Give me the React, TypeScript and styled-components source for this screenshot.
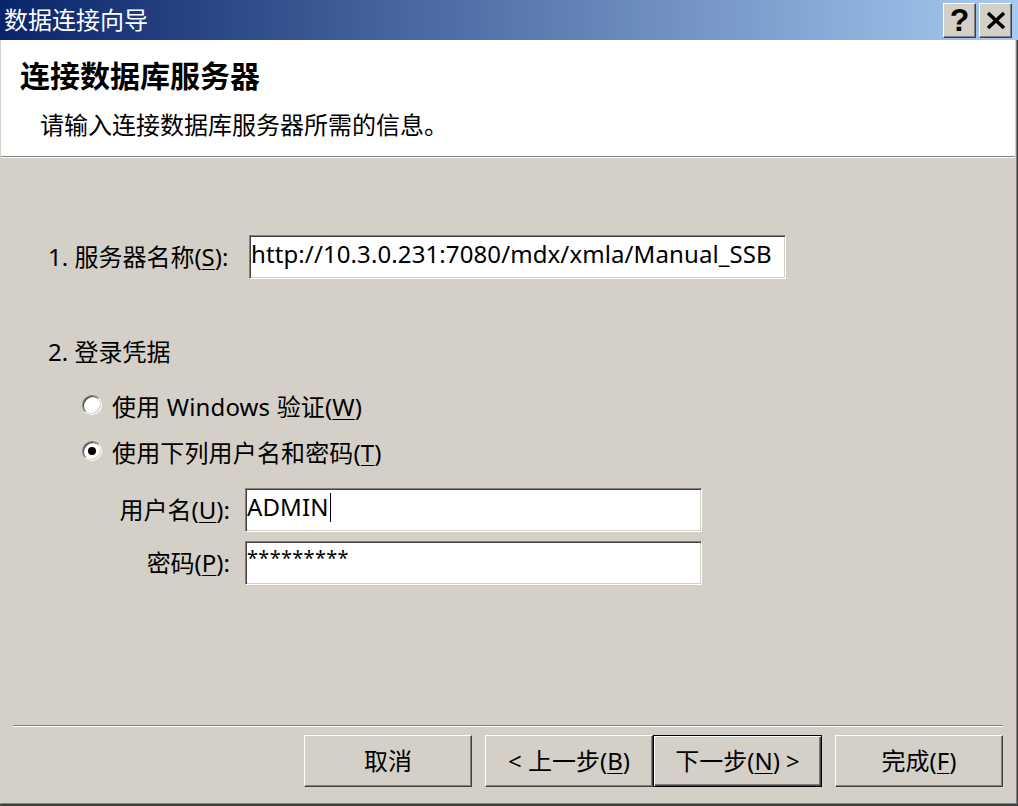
import styled, { createGlobalStyle } from 'styled-components'

const GlobalStyle = createGlobalStyle`
  html, body {
    margin: 0;
    padding: 0;
    background: #d4d0c8;
  }
  body {
    font-family: "Noto Sans", "Noto Sans CJK SC", sans-serif;
    color: #000;
  }
`

const Window = styled.div`
  width: 1018px;
  height: 806px;
  display: flex;
  flex-direction: column;
  background: #d4d0c8;
  overflow: hidden;
`

const TitleBar = styled.div`
  flex: none;
  height: 40px;
  display: flex;
  align-items: center;
  padding: 0 6px 0 4px;
  background: linear-gradient(to right, #0a246a, #a6caf0);
`

const Title = styled.div`
  flex: 1;
  color: #fff;
  font-size: 24px;
  line-height: 40px;
`

const CaptionButtons = styled.div`
  display: flex;
  gap: 3px;
`

const CaptionButton = styled.div`
  width: 33px;
  height: 35px;
  box-sizing: border-box;
  display: flex;
  align-items: center;
  justify-content: center;
  background: #d4d0c8;
  border-top: 1px solid #fff;
  border-left: 1px solid #fff;
  border-right: 1px solid #404040;
  border-bottom: 1px solid #404040;
  box-shadow: inset -1px -1px 0 #808080;
  font-family: "Liberation Sans", Arial, sans-serif;
  font-weight: bold;
  font-size: 32px;
  line-height: 1;
`

const Frame = styled.div`
  flex: 1;
  display: flex;
  flex-direction: column;
  min-height: 0;
  border-right: 1px solid #404040;
  border-bottom: 2px solid #404040;
`

const FrameInner = styled.div`
  flex: 1;
  display: flex;
  flex-direction: column;
  min-height: 0;
  padding-right: 1px;
  border-left: 1px solid #d4d0c8;
  border-right: 1px solid #808080;
  border-bottom: 1px solid #808080;
`

const Header = styled.div`
  flex: none;
  height: 116px;
  box-sizing: border-box;
  padding: 18px 19px 0;
  background: #fff;
`

const Heading = styled.div`
  font-size: 30px;
  font-weight: bold;
  line-height: 36px;
`

const Subtitle = styled.div`
  margin: 15px 0 0 20px;
  font-size: 24px;
  line-height: 32px;
`

const EtchedRule = styled.div`
  flex: none;
  height: 0;
  border-top: 1px solid #808080;
  border-bottom: 1px solid #fff;
`

const Body = styled.div`
  flex: 1;
  display: flex;
  flex-direction: column;
  min-height: 0;
`

const Form = styled.div`
  padding: 77px 0 0 47px;
  font-size: 24px;
`

const FieldRow = styled.div<{ $gap?: number }>`
  display: flex;
  align-items: center;
  margin-top: ${(p) => p.$gap ?? 0}px;
`

const Label = styled.div<{ $width: number; $right?: boolean }>`
  width: ${(p) => p.$width}px;
  flex: none;
  text-align: ${(p) => (p.$right ? 'right' : 'left')};
  line-height: 32px;
  white-space: nowrap;
`

const Field = styled.div<{ $width: number; $left?: number; $masked?: boolean }>`
  width: ${(p) => p.$width}px;
  height: 44px;
  margin-left: ${(p) => p.$left ?? 0}px;
  box-sizing: border-box;
  padding: ${(p) => (p.$masked ? '4px 4px 0 1px' : '2px 4px 0 1px')};
  background: #fff;
  border-top: 1px solid #808080;
  border-left: 1px solid #808080;
  border-bottom: 1px solid #fff;
  border-right: 1px solid #fff;
  box-shadow: inset 1px 1px 0 #404040, inset -1px -1px 0 #d4d0c8;
  font-size: ${(p) => (p.$masked ? 20 : 24)}px;
  letter-spacing: ${(p) => (p.$masked ? 0.3 : 0.1)}px;
  line-height: ${(p) => (p.$masked ? 24 : 32)}px;
  white-space: nowrap;
  overflow: hidden;
`

const Caret = styled.span`
  display: inline-block;
  width: 1px;
  height: 29px;
  margin-left: 1px;
  background: #000;
  vertical-align: -6px;
`

const SectionTitle = styled.div`
  margin-top: 57px;
  line-height: 32px;
`

const RadioList = styled.div`
  margin-top: 21px;
  padding-left: 34px;
  display: flex;
  flex-direction: column;
  gap: 14px;
`

const RadioOption = styled.label`
  display: flex;
  align-items: center;
  gap: 10px;
  height: 32px;
  letter-spacing: 0.15px;
`

const RadioRing = styled.span`
  width: 20px;
  height: 20px;
  box-sizing: border-box;
  padding: 1px;
  border-radius: 50%;
  background: linear-gradient(135deg, #808080 50%, #fff 50%);
`

const RadioWell = styled.span<{ $checked?: boolean }>`
  display: flex;
  align-items: center;
  justify-content: center;
  width: 18px;
  height: 18px;
  box-sizing: border-box;
  border-radius: 50%;
  background: #fff;
  box-shadow: inset 1px 1px 0 #404040, inset -1px -1px 0 #d4d0c8;

  &::after {
    content: '';
    width: 8px;
    height: 8px;
    border-radius: 50%;
    background: ${(p) => (p.$checked ? '#000' : 'transparent')};
  }
`

const Key = styled.span`
  text-decoration: underline;
  text-underline-offset: 3px;
  text-decoration-thickness: 1px;
`

const Footer = styled.div`
  margin-top: auto;
  padding: 0 12px 16px;
`

const ButtonRow = styled.div`
  display: flex;
  justify-content: flex-end;
  margin-top: 8px;
`

const Button = styled.button<{ $default?: boolean; $gap?: number; $width?: number }>`
  width: ${(p) => p.$width ?? 168}px;
  height: 52px;
  margin-left: ${(p) => p.$gap ?? 0}px;
  padding: 0;
  box-sizing: border-box;
  background: #d4d0c8;
  color: #000;
  font-family: "Noto Sans", "Noto Sans CJK SC", sans-serif;
  font-size: 24px;
  line-height: 32px;
  border-top: 1px solid ${(p) => (p.$default ? '#000' : '#fff')};
  border-left: 1px solid ${(p) => (p.$default ? '#000' : '#fff')};
  border-right: 1px solid ${(p) => (p.$default ? '#000' : '#404040')};
  border-bottom: 1px solid ${(p) => (p.$default ? '#000' : '#404040')};
  box-shadow: ${(p) =>
    p.$default
      ? 'inset 1px 1px 0 #fff, inset -1px -1px 0 #404040, inset -2px -2px 0 #808080'
      : 'inset -1px -1px 0 #808080'};
`

const CloseIcon = () => (
  <svg width="22" height="19" viewBox="0 0 22 19">
    <path d="M3 2 L19 17 M19 2 L3 17" stroke="#000" strokeWidth="3.6" />
  </svg>
)

export default function App() {
  return (
    <>
      <GlobalStyle />
      <Window>
        <TitleBar>
          <Title>数据连接向导</Title>
          <CaptionButtons>
            <CaptionButton>?</CaptionButton>
            <CaptionButton>
              <CloseIcon />
            </CaptionButton>
          </CaptionButtons>
        </TitleBar>
        <Frame>
          <FrameInner>
            <Header>
              <Heading>连接数据库服务器</Heading>
              <Subtitle>请输入连接数据库服务器所需的信息。</Subtitle>
            </Header>
            <EtchedRule />
            <Body>
              <Form>
                <FieldRow>
                  <Label $width={201}>
                    1. 服务器名称(<Key>S</Key>):
                  </Label>
                  <Field $width={537}>http://10.3.0.231:7080/mdx/xmla/Manual_SSB</Field>
                </FieldRow>

                <SectionTitle>2. 登录凭据</SectionTitle>

                <RadioList>
                  <RadioOption>
                    <RadioRing>
                      <RadioWell />
                    </RadioRing>
                    <span>
                      使用 Windows 验证(<Key>W</Key>)
                    </span>
                  </RadioOption>
                  <RadioOption>
                    <RadioRing>
                      <RadioWell $checked />
                    </RadioRing>
                    <span>
                      使用下列用户名和密码(<Key>T</Key>)
                    </span>
                  </RadioOption>
                </RadioList>

                <FieldRow $gap={21}>
                  <Label $width={182} $right>
                    用户名(<Key>U</Key>):
                  </Label>
                  <Field $width={457} $left={15}>
                    ADMIN
                    <Caret />
                  </Field>
                </FieldRow>
                <FieldRow $gap={9}>
                  <Label $width={182} $right>
                    密码(<Key>P</Key>):
                  </Label>
                  <Field $width={457} $left={15} $masked>
                    *********
                  </Field>
                </FieldRow>
              </Form>

              <Footer>
                <EtchedRule />
                <ButtonRow>
                  <Button>取消</Button>
                  <Button $gap={13}>
                    &lt; 上一步(<Key>B</Key>)
                  </Button>
                  <Button $default $width={169}>
                    下一步(<Key>N</Key>) &gt;
                  </Button>
                  <Button $gap={13}>
                    完成(<Key>F</Key>)
                  </Button>
                </ButtonRow>
              </Footer>
            </Body>
          </FrameInner>
        </Frame>
      </Window>
    </>
  )
}
